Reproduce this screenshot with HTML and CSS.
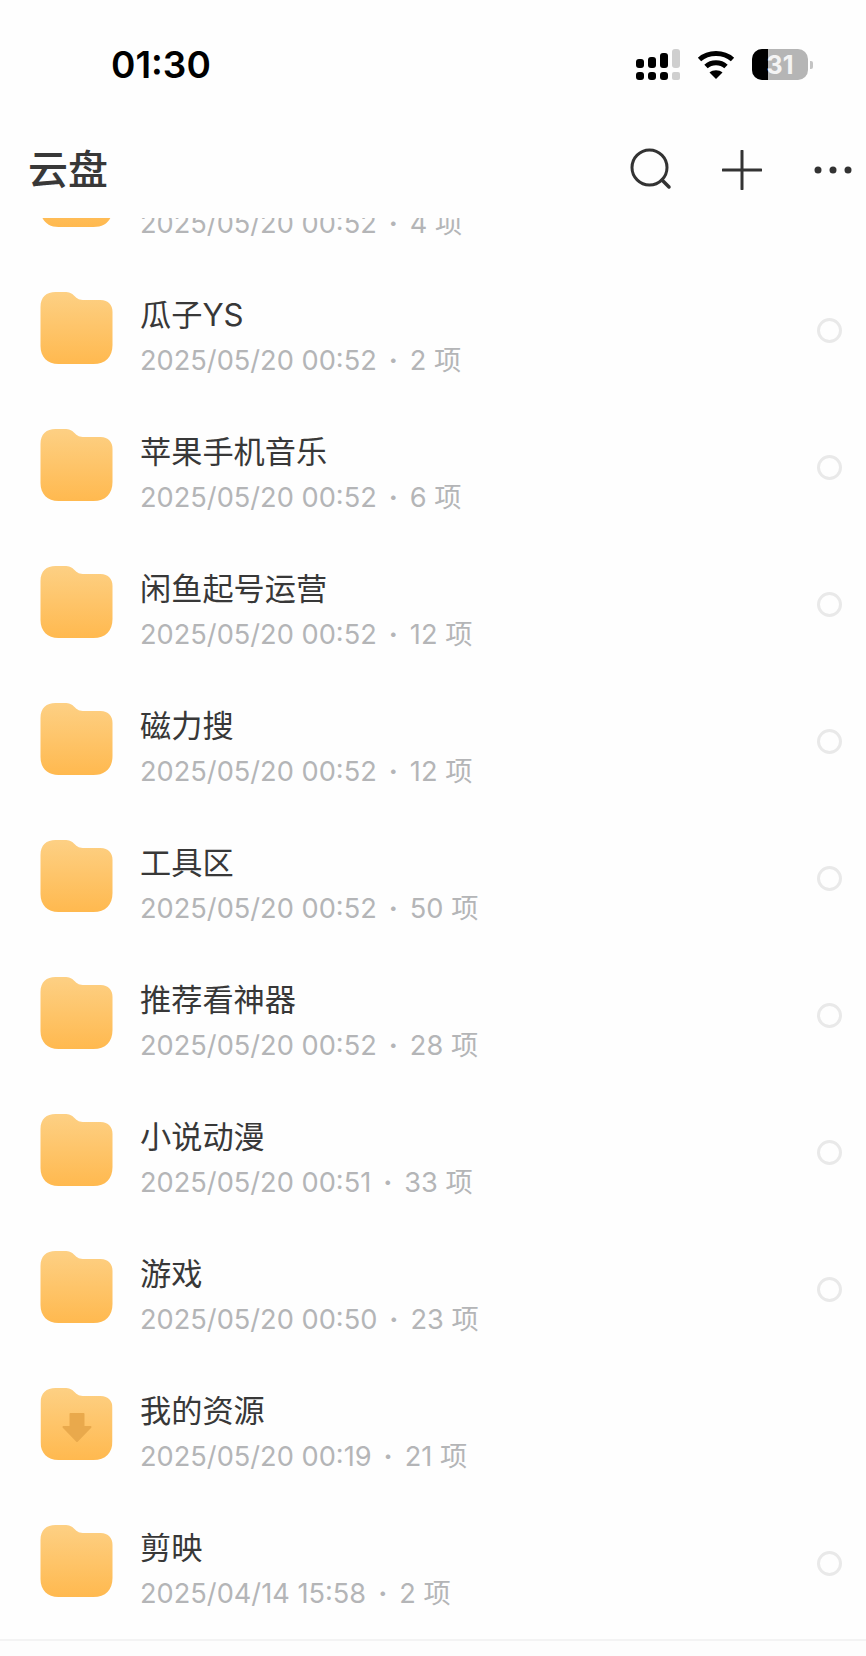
FILE: index.html
```html
<!DOCTYPE html>
<html lang="zh-CN">
    <head>
        <meta charset="UTF-8">
        <title>云盘</title>
        <link rel="stylesheet" href="styles.css">
    </head>
    <body>
        <svg class="defs" width="0" height="0">
            <defs>
                <linearGradient id="folderFill" x1="0" y1="0" x2="0" y2="1">
                    <stop offset="0" stop-color="#fdd084"></stop>
                    <stop offset="1" stop-color="#ffb94f"></stop>
                </linearGradient>
                <symbol id="folder" viewBox="0 0 72 72">
                    <path fill="url(#folderFill)" d="M0 15C0 5 6 0 15 0H24C29 0 31 1 34 4C37 7 39 8 44 8H60C68 8 72 13 72 20V53C72 65 65 72 53 72H18C7 72 0 65 0 54Z"></path>
                </symbol>
            </defs>
        </svg>

        <div class="status">
            <span class="status__time">01:30</span>
            <div class="status__icons">
                <svg class="status__signal" width="44" height="31" viewBox="0 0 44 31">
                    <g fill="#000">
                        <rect x="0" y="10" width="8" height="9" rx="3"></rect>
                        <rect x="12" y="8" width="8" height="11" rx="3"></rect>
                        <rect x="24" y="4" width="8" height="15" rx="3"></rect>
                        <rect x="0" y="23" width="8" height="8" rx="3"></rect>
                        <rect x="12" y="23" width="8" height="8" rx="3"></rect>
                        <rect x="24" y="23" width="8" height="8" rx="3"></rect>
                    </g>
                    <rect x="36" y="0" width="8" height="19" rx="3" fill="#cfcfcf"></rect>
                    <rect x="36" y="23" width="8" height="8" rx="2" fill="#cfcfcf"></rect>
                </svg>
                <svg class="status__wifi" width="38" height="29" viewBox="0 0 38 29">
                    <path fill="none" stroke="#000" stroke-width="5" d="M2.5 9.5C11.5 1.5 26.5 1.5 35.5 9.5"></path>
                    <path fill="none" stroke="#000" stroke-width="5" d="M9 16.5C14.5 11.5 23.5 11.5 29 16.5"></path>
                    <path fill="#000" d="M12.5 22.5C16 19.5 22 19.5 25.5 22.5L19 29Z"></path>
                </svg>
                <div class="battery">
                    <div class="battery__level"></div>
                    <span class="battery__text">31</span>
                </div>
                <div class="battery__nub"></div>
            </div>
        </div>

        <header class="header">
            <h1 class="header__title">云盘</h1>
            <div class="header__actions">
                <svg width="44" height="44" viewBox="0 0 44 44">
                    <circle cx="19.5" cy="19.5" r="17.5" fill="none" stroke="#333" stroke-width="3"></circle>
                    <path d="M32 32L39 39" fill="none" stroke="#333" stroke-width="3.5" stroke-linecap="round"></path>
                </svg>
                <svg width="40" height="40" viewBox="0 0 40 40">
                    <path d="M20 1V39M1 20H39" fill="none" stroke="#333" stroke-width="3" stroke-linecap="round"></path>
                </svg>
                <svg width="38" height="8" viewBox="0 0 38 8">
                    <circle cx="4" cy="4" r="3.5" fill="#333"></circle>
                    <circle cx="19" cy="4" r="3.5" fill="#333"></circle>
                    <circle cx="34" cy="4" r="3.5" fill="#333"></circle>
                </svg>
            </div>
        </header>

        <main class="list">
            <div class="row row--first">
                <svg class="row__icon"><use href="#folder"></use></svg>
                <div class="row__text">
                    <div class="row__name"></div>
                    <div class="row__meta">2025/05/20 00:52<i>·</i>4 项</div>
                </div>
                <span class="row__check"></span>
            </div>
            <div class="row">
                <svg class="row__icon"><use href="#folder"></use></svg>
                <div class="row__text">
                    <div class="row__name">瓜子YS</div>
                    <div class="row__meta">2025/05/20 00:52<i>·</i>2 项</div>
                </div>
                <span class="row__check"></span>
            </div>
            <div class="row">
                <svg class="row__icon"><use href="#folder"></use></svg>
                <div class="row__text">
                    <div class="row__name">苹果手机音乐</div>
                    <div class="row__meta">2025/05/20 00:52<i>·</i>6 项</div>
                </div>
                <span class="row__check"></span>
            </div>
            <div class="row">
                <svg class="row__icon"><use href="#folder"></use></svg>
                <div class="row__text">
                    <div class="row__name">闲鱼起号运营</div>
                    <div class="row__meta">2025/05/20 00:52<i>·</i>12 项</div>
                </div>
                <span class="row__check"></span>
            </div>
            <div class="row">
                <svg class="row__icon"><use href="#folder"></use></svg>
                <div class="row__text">
                    <div class="row__name">磁力搜</div>
                    <div class="row__meta">2025/05/20 00:52<i>·</i>12 项</div>
                </div>
                <span class="row__check"></span>
            </div>
            <div class="row">
                <svg class="row__icon"><use href="#folder"></use></svg>
                <div class="row__text">
                    <div class="row__name">工具区</div>
                    <div class="row__meta">2025/05/20 00:52<i>·</i>50 项</div>
                </div>
                <span class="row__check"></span>
            </div>
            <div class="row">
                <svg class="row__icon"><use href="#folder"></use></svg>
                <div class="row__text">
                    <div class="row__name">推荐看神器</div>
                    <div class="row__meta">2025/05/20 00:52<i>·</i>28 项</div>
                </div>
                <span class="row__check"></span>
            </div>
            <div class="row">
                <svg class="row__icon"><use href="#folder"></use></svg>
                <div class="row__text">
                    <div class="row__name">小说动漫</div>
                    <div class="row__meta">2025/05/20 00:51<i>·</i>33 项</div>
                </div>
                <span class="row__check"></span>
            </div>
            <div class="row">
                <svg class="row__icon"><use href="#folder"></use></svg>
                <div class="row__text">
                    <div class="row__name">游戏</div>
                    <div class="row__meta">2025/05/20 00:50<i>·</i>23 项</div>
                </div>
                <span class="row__check"></span>
            </div>
            <div class="row">
                <svg class="row__icon" viewBox="0 0 72 72">
                    <use href="#folder" width="72" height="72"></use>
                    <path fill="#e9a94c" d="M30 26H43V39H50L36.5 53L23 39H30Z" stroke="#e9a94c" stroke-width="2" stroke-linejoin="round"></path>
                </svg>
                <div class="row__text">
                    <div class="row__name">我的资源</div>
                    <div class="row__meta">2025/05/20 00:19<i>·</i>21 项</div>
                </div>
            </div>
            <div class="row">
                <svg class="row__icon"><use href="#folder"></use></svg>
                <div class="row__text">
                    <div class="row__name">剪映</div>
                    <div class="row__meta">2025/04/14 15:58<i>·</i>2 项</div>
                </div>
                <span class="row__check"></span>
            </div>
        </main>
        <div class="bottom"></div>
    </body>
</html>
```

FILE: styles.css
```css
:root{
    --font: Inter, "Noto Sans CJK SC", sans-serif;
    --text: #383838;
    --muted: #b4b5b7;
}

html, body{
    margin: 0;
    background-color: #fefefe;
}

body{
    width: 866px;
    height: 1656px;
    overflow: hidden;
    font-family: var(--font);
    display: flex;
    flex-direction: column;
}

.defs{
    display: block;
    height: 0;
}

.status{
    height: 124px;
    flex: none;
    padding: 46px 53px 0 111px;
    box-sizing: border-box;
    display: flex;
    justify-content: space-between;
    align-items: flex-start;
}

.status__time{
    font-size: 37px;
    font-weight: 600;
    line-height: 38px;
    color: #000;
}

.status__icons{
    display: flex;
    align-items: flex-start;
    margin-top: 3px;
}

.status__wifi{
    margin: 1px 17px 0 17px;
}

.battery{
    width: 56px;
    height: 31px;
    border-radius: 10px;
    background-color: #b5b5b5;
    overflow: hidden;
    display: flex;
    position: relative;
    justify-content: center;
    align-items: center;
}

.battery__level{
    position: absolute;
    left: 0;
    top: 0;
    bottom: 0;
    width: 16px;
    background-color: #000;
}

.battery__text{
    position: relative;
    font-size: 25px;
    font-weight: 700;
    color: #f4f4f4;
}

.battery__nub{
    width: 3px;
    height: 8px;
    margin: 12px 0 0 2px;
    border-radius: 0 2px 2px 0;
    background-color: #c4c4c4;
}

.header{
    height: 94px;
    flex: none;
    padding: 0 14px 0 28px;
    box-sizing: border-box;
    display: flex;
    justify-content: space-between;
    align-items: flex-start;
}

.header__title{
    margin: 20px 0 0;
    font-size: 40px;
    font-weight: 500;
    line-height: 52px;
    color: var(--text);
}

.header__actions{
    display: flex;
    align-items: center;
    height: 44px;
    margin-top: 24px;
}

.header__actions svg:nth-child(2){
    margin: 0 52px 0 48px;
}

.list{
    height: 1421px;
    flex: none;
    overflow: hidden;
    border-bottom: 2px solid #f3f3f3;
}

.row{
    height: 137px;
    padding: 0 24px 0 40px;
    display: flex;
    align-items: center;
}

.row--first{
    margin-top: -96px;
}

.row__icon{
    width: 73px;
    height: 72px;
    flex: none;
}

.row__text{
    flex: 1;
    margin: 15px 0 0 27px;
}

.row__name{
    min-height: 40px;
    font-size: 31.2px;
    line-height: 40px;
    color: var(--text);
}

.row__meta{
    margin-top: 11px;
    font-size: 27.2px;
    line-height: 30px;
    color: var(--muted);
}

.row__meta i{
    font-style: normal;
    font-weight: 700;
    margin: 0 12px;
}

.row__check{
    width: 25px;
    height: 25px;
    box-sizing: border-box;
    margin-top: 6px;
    border: 3px solid #e9e9e9;
    border-radius: 50%;
}

.bottom{
    flex: 1;
    background-color: #fdfdfd;
}
```
